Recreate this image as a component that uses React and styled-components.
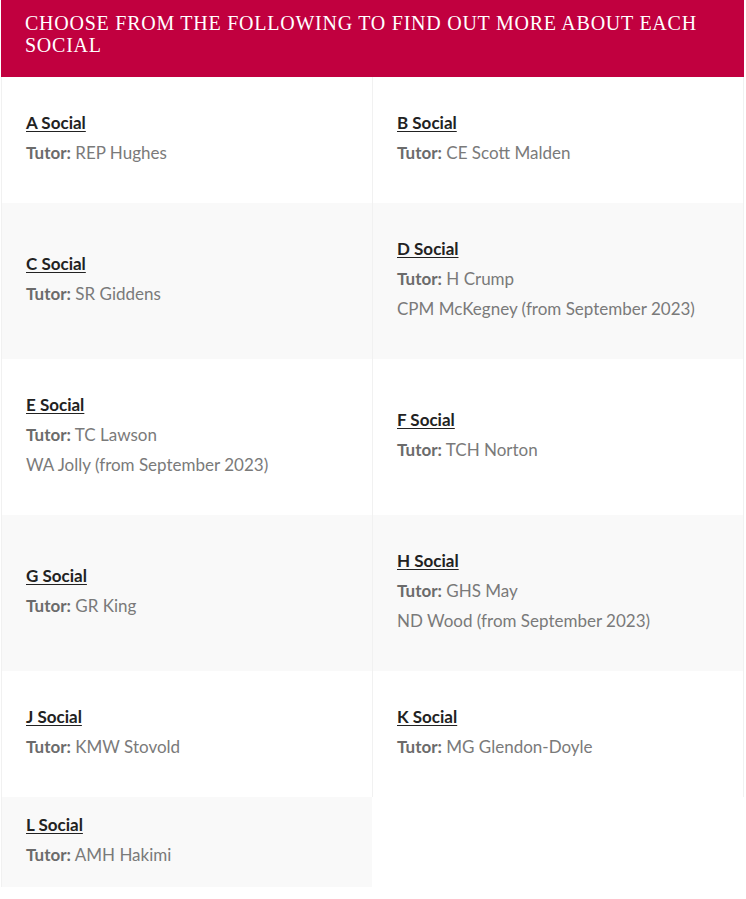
import React from 'react';
import styled, { createGlobalStyle } from 'styled-components';

const GlobalStyle = createGlobalStyle`
  body {
    margin: 0;
    background: #fff;
    font-family: Lato, "Open Sans", sans-serif;
  }
`;

const Wrapper = styled.div`
  width: 743px;
  margin-left: 1px;
`;

const Banner = styled.h2`
  margin: 0;
  height: 77px;
  box-sizing: border-box;
  padding: 12px 24px 0;
  background: #c1003f;
  color: #fff;
  font-family: "Liberation Serif", serif;
  font-weight: normal;
  font-size: 20px;
  line-height: 22px;
  letter-spacing: 0.75px;
  text-transform: uppercase;
`;

const Grid = styled.div`
  display: grid;
  grid-template-columns: 371px 372px;
`;

const Cell = styled.div`
  display: flex;
  flex-direction: column;
  justify-content: center;
  padding: ${p => (p.$tight ? '13px 24px 11px' : '31px 24px 29px')};
  background: ${p => (p.$shade ? '#f9f9f9' : '#fff')};
  border-left: 1px solid #f1f1f1;
  border-right: ${p => (p.$right ? '1px solid #f1f1f1' : 'none')};
`;

const Title = styled.a`
  display: block;
  color: #222;
  font-size: 17px;
  font-weight: bold;
  line-height: 30px;
  text-decoration: underline;
  text-underline-offset: 2px;
`;

const Line = styled.div`
  color: #7a7a7a;
  font-size: 17px;
  line-height: 30px;
`;

const Label = styled.b`
  color: #6b6b6b;
`;

const Lines = styled.div`
  margin-bottom: 6px;
`;

const socials = [
  { name: 'A Social', tutor: 'REP Hughes' },
  { name: 'B Social', tutor: 'CE Scott Malden' },
  { name: 'C Social', tutor: 'SR Giddens' },
  { name: 'D Social', tutor: 'H Crump', next: 'CPM McKegney (from September 2023)' },
  { name: 'E Social', tutor: 'TC Lawson', next: 'WA Jolly (from September 2023)' },
  { name: 'F Social', tutor: 'TCH Norton' },
  { name: 'G Social', tutor: 'GR King' },
  { name: 'H Social', tutor: 'GHS May', next: 'ND Wood (from September 2023)' },
  { name: 'J Social', tutor: 'KMW Stovold' },
  { name: 'K Social', tutor: 'MG Glendon-Doyle' },
  { name: 'L Social', tutor: 'AMH Hakimi', tight: true },
];

export default function App() {
  return (
    <Wrapper>
      <GlobalStyle />
      <Banner>Choose from the following to find out more about each social</Banner>
      <Grid>
        {socials.map((s, i) => (
          <Cell
            key={s.name}
            $shade={Math.floor(i / 2) % 2 === 1}
            $right={i % 2 === 1}
            $tight={s.tight}
          >
            <Title href="#">{s.name}</Title>
            <Lines>
              <Line><Label>Tutor:</Label> {s.tutor}</Line>
              {s.next && <Line>{s.next}</Line>}
            </Lines>
          </Cell>
        ))}
      </Grid>
    </Wrapper>
  );
}
